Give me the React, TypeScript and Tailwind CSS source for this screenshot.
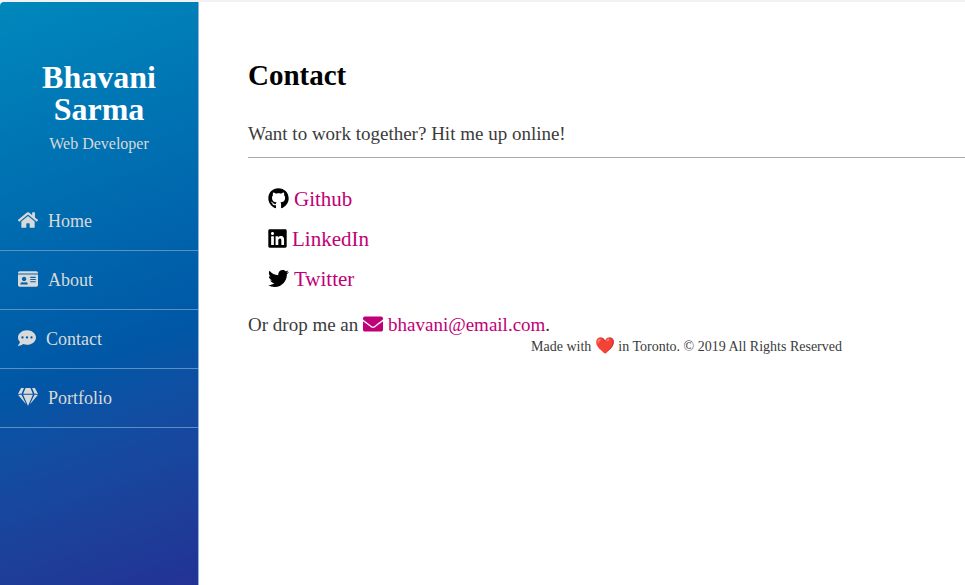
import { FaHome, FaIdCard, FaCommentDots, FaGem, FaGithub, FaLinkedin, FaTwitter, FaEnvelope } from 'react-icons/fa';

const nav = [
  { label: 'Home', icon: FaHome, width: 'w-5' },
  { label: 'About', icon: FaIdCard, width: 'w-5' },
  { label: 'Contact', icon: FaCommentDots, width: 'w-[18px]' },
  { label: 'Portfolio', icon: FaGem, width: 'w-5' },
];

const socials = [
  { label: 'Github', icon: FaGithub, width: 'w-[21px]' },
  { label: 'LinkedIn', icon: FaLinkedin, width: 'w-[19px]' },
  { label: 'Twitter', icon: FaTwitter, width: 'w-[21px]' },
];

export default function App() {
  return (
    <div className="flex min-h-screen border-t-2 border-[#f2f2f2] bg-white font-['Liberation_Serif',serif]">
      <aside className="w-[199px] shrink-0 rounded-tl-sm border-r border-[#8fb4dc] bg-linear-160 from-[#0188bc] via-[#0057a6] via-60% to-[#223294] pt-[59px] text-[#d9d9d9]">
        <header className="px-8 text-center">
          <h1 className="text-[32px] leading-8 font-bold text-white">Bhavani Sarma</h1>
          <p className="mt-2 text-base leading-[22px]">Web Developer</p>
        </header>
        <nav className="mt-[37px]">
          <ul>
            {nav.map(({ label, icon: Icon, width }) => (
              <li key={label} className="border-b border-[#5c8fc4]">
                <a href="#" className="flex h-[58px] items-center gap-2.5 px-[18px] text-lg">
                  <Icon className={`mb-0.5 h-[18px] shrink-0 ${width}`} />
                  {label}
                </a>
              </li>
            ))}
          </ul>
        </nav>
      </aside>
      <main className="grow pt-[55px] pl-[49px] text-[19px] text-[#3b3b3b]">
        <h2 className="text-[29px] leading-9 font-bold text-black">Contact</h2>
        <p className="mt-[29px] leading-6">Want to work together? Hit me up online!</p>
        <hr className="mt-[11px] border-[#aaa]" />
        <ul className="mt-[22px] pl-5 text-[21px]">
          {socials.map(({ label, icon: Icon, width }) => (
            <li key={label} className="flex h-10 items-center gap-[5px] text-black">
              <Icon className={`mb-1 h-[21px] shrink-0 ${width}`} />
              <a href="#" className="text-[#bf0077]">{label}</a>
            </li>
          ))}
        </ul>
        <p className="mt-[13px] flex items-center leading-6">
          Or drop me an&nbsp;
          <a href="#" className="flex items-center gap-[5px] text-[#bf0077]">
            <FaEnvelope className="mb-0.5 size-5" />
            bhavani@email.com
          </a>
          .
        </p>
        <footer className="pl-40 text-center text-sm leading-[18px]">
          Made with <span className="text-base leading-[18px]">❤️</span> in Toronto. © 2019 All Rights Reserved
        </footer>
      </main>
    </div>
  );
}
